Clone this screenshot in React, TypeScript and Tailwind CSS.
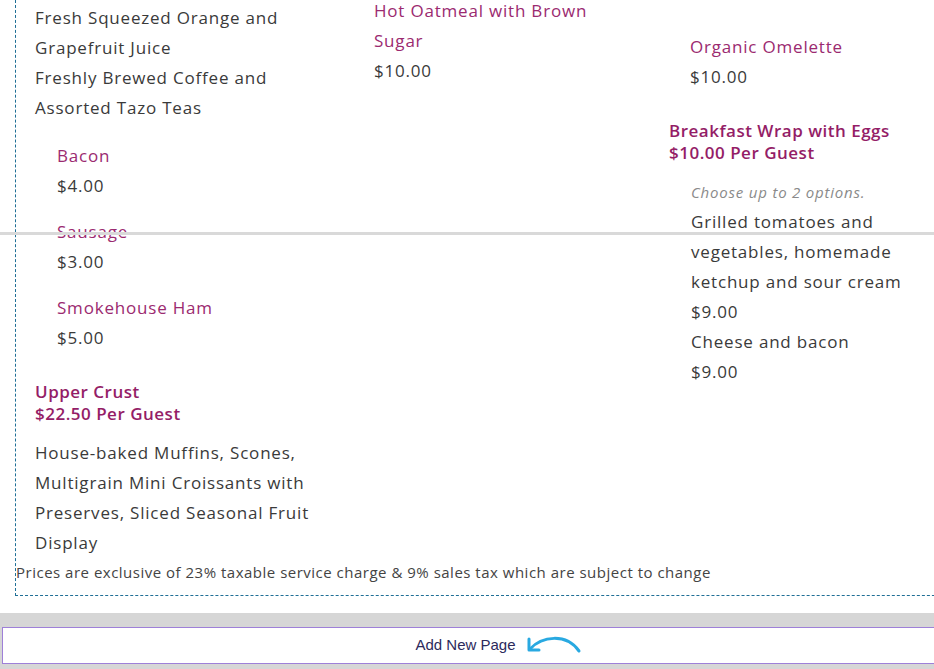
import React from "react";

const body = "text-[17px] leading-[30px] tracking-[0.8px] text-[#3a3a3a]";
const name = "text-[17px] leading-[30px] tracking-[0.8px] text-[#9b2a70]";
const head = "text-[17px] leading-[22px] font-semibold tracking-[0.5px] text-[#941d67]";

function Item({ lines, price, className = "" }: { lines: string[]; price: string; className?: string }) {
  return (
    <div className={className}>
      {lines.map((l) => (
        <div key={l} className={name}>
          {l}
        </div>
      ))}
      <div className={body}>{price}</div>
    </div>
  );
}

function Lines({ lines, className = "" }: { lines: string[]; className?: string }) {
  return (
    <div className={className}>
      {lines.map((l) => (
        <div key={l} className={body}>
          {l}
        </div>
      ))}
    </div>
  );
}

export default function App() {
  return (
    <div className="relative w-[934px] h-[669px] overflow-hidden bg-white font-['Open_Sans',sans-serif]">
      {/* menu page */}
      <div className="ml-[15px] w-[960px] border-l border-b border-dashed border-[#1f6f96] pb-[13px]">
        <div className="flex pl-[19px]">
          {/* column 1 */}
          <div className="w-[317px] shrink-0 mt-[3px]">
            <Lines
              lines={[
                "Fresh Squeezed Orange and",
                "Grapefruit Juice",
                "Freshly Brewed Coffee and",
                "Assorted Tazo Teas",
              ]}
            />
            <div className="pl-[22px] mt-[18px] flex flex-col gap-[16px]">
              <Item lines={["Bacon"]} price="$4.00" />
              <Item lines={["Sausage"]} price="$3.00" />
              <Item lines={["Smokehouse Ham"]} price="$5.00" />
            </div>
            <div className="mt-[28px]">
              <div className={head}>Upper Crust</div>
              <div className={head}>$22.50 Per Guest</div>
            </div>
            <Lines
              className="mt-[13px]"
              lines={[
                "House-baked Muffins, Scones,",
                "Multigrain Mini Croissants with",
                "Preserves, Sliced Seasonal Fruit",
                "Display",
              ]}
            />
          </div>

          {/* column 2 */}
          <div className="w-[317px] shrink-0 mt-[-4px] pl-[22px]">
            <Item lines={["Hot Oatmeal with Brown", "Sugar"]} price="$10.00" />
          </div>

          {/* column 3 */}
          <div className="w-[300px] shrink-0 mt-[32px]">
            <Item className="pl-[21px]" lines={["Organic Omelette"]} price="$10.00" />
            <div className="mt-[28px]">
              <div className={head}>Breakfast Wrap with Eggs</div>
              <div className={head}>$10.00 Per Guest</div>
            </div>
            <div className="pl-[22px] mt-[13px]">
              <div className="text-[15px] leading-[30px] italic tracking-[0.8px] text-[#8a8a8a]">Choose up to 2 options.</div>
              <Lines
                lines={[
                  "Grilled tomatoes and",
                  "vegetables, homemade",
                  "ketchup and sour cream",
                ]}
              />
              <div className={body}>$9.00</div>
              <div className={body}>Cheese and bacon</div>
              <div className={body}>$9.00</div>
            </div>
          </div>
        </div>

        <div className="mt-[4px] text-[15px] leading-[20px] tracking-[0.5px] text-[#444]">
          Prices are exclusive of 23% taxable service charge &amp; 9% sales tax which are subject to change
        </div>
      </div>

      {/* add page bar */}
      <div className="mt-[17px] bg-[#d6d6d6] pt-[14px] pb-[10px]">
        <div className="ml-[2px] w-[993px] h-[37px] border border-[#9e80d8] bg-white flex items-center justify-center gap-[10px]">
          <span className="font-['Liberation_Sans',sans-serif] text-[15px] text-[#2c2a5c]">Add New Page</span>
          <svg width="56" height="22" viewBox="0 0 56 22" fill="none" stroke="#29a9e1" strokeWidth="3" strokeLinecap="round" strokeLinejoin="round" className="mt-[-2px]">
            <path d="M4 15 C 16 2, 40 -1, 53 17" />
            <path d="M3 5 L3 16 L13 16" />
          </svg>
        </div>
      </div>

      {/* page break marker */}
      <div className="absolute left-0 top-[232px] w-full h-[3px] bg-[#d9d9d9]" />
    </div>
  );
}
